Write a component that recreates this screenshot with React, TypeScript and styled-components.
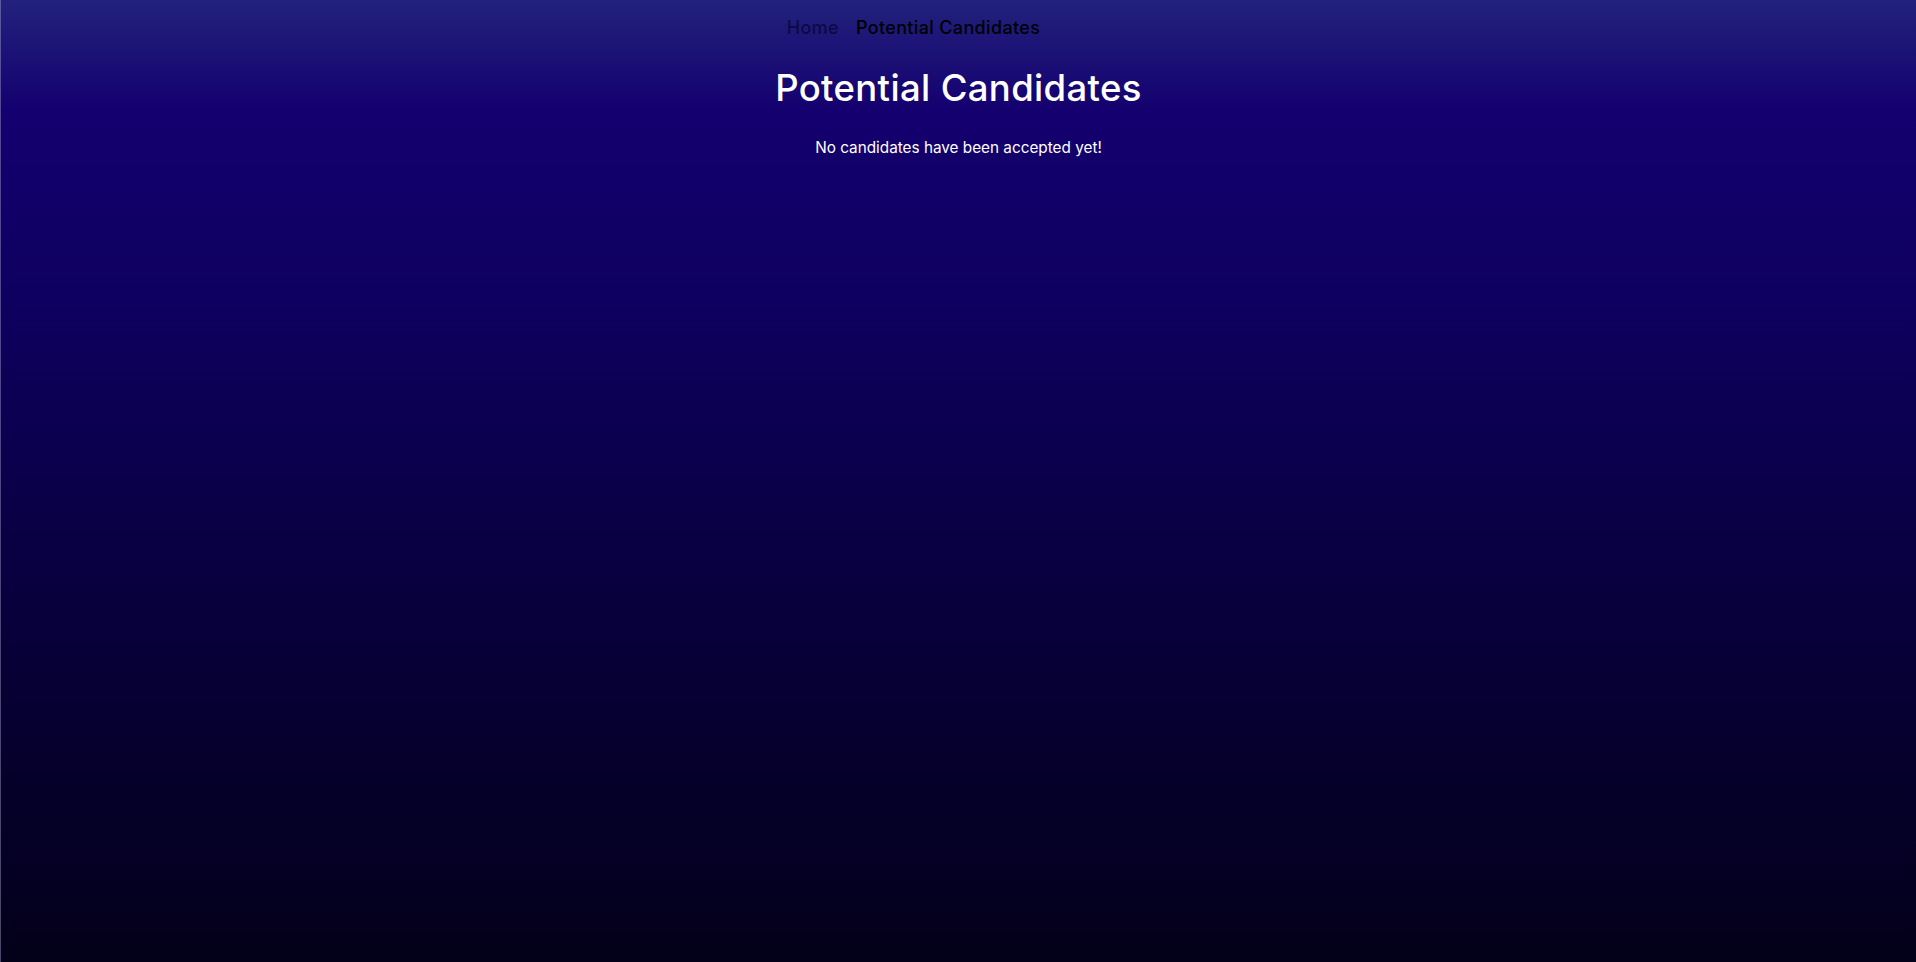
import React from "react";
import styled, { createGlobalStyle } from "styled-components";

const GlobalStyle = createGlobalStyle`
  html, body {
    margin: 0;
    padding: 0;
    height: 100%;
  }
  body {
    font-family: Inter, "Noto Sans", "Liberation Sans", sans-serif;
    background: #030018;
  }
  #root {
    min-height: 100%;
  }
`;

const Page = styled.div`
  min-height: 962px;
  box-sizing: border-box;
  border-left: 1px solid rgba(160, 160, 200, 0.45);
  background: linear-gradient(
    to bottom,
    #22227c 0%,
    #14006f 11.5%,
    #0e0060 30%,
    #08003f 60%,
    #030019 100%
  );
  display: flex;
  flex-direction: column;
  align-items: center;
  color: #ffffff;
`;

const Nav = styled.nav`
  display: flex;
  gap: 17px;
  padding: 13px 90px 0 0;
  height: 30px;
  align-items: center;
  box-sizing: content-box;
`;

const NavLink = styled.a<{ $active?: boolean }>`
  font-size: 18px;
  font-weight: 450;
  letter-spacing: 0.35px;
  line-height: 22px;
  text-decoration: none;
  color: ${(p) => (p.$active ? "#000000" : "rgba(8, 6, 50, 0.8)")};
  cursor: pointer;
`;

const Title = styled.h1`
  margin: 23px 0 0;
  font-size: 36.5px;
  font-weight: 500;
  letter-spacing: 0.35px;
  line-height: 44px;
  color: #ffffff;
`;

const Message = styled.p`
  margin: 28px 0 0;
  font-size: 15.3px;
  font-weight: 400;
  line-height: 20px;
  color: #ffffff;
`;

export default function App() {
  return (
    <>
      <GlobalStyle />
      <Page>
        <Nav>
          <NavLink href="#">Home</NavLink>
          <NavLink href="#" $active>
            Potential Candidates
          </NavLink>
        </Nav>
        <Title>Potential Candidates</Title>
        <Message>No candidates have been accepted yet!</Message>
      </Page>
    </>
  );
}
